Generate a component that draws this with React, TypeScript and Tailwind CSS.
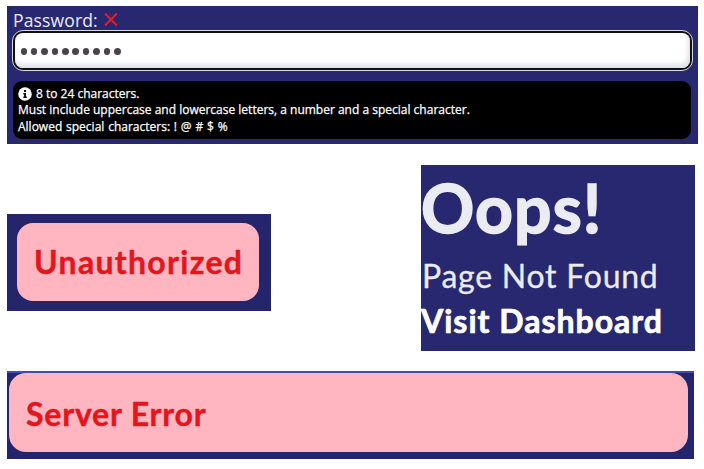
function PasswordField() {
  return (
    <section className="ml-[7px] h-[138px] w-[691px] bg-[#282871] px-[5px] pt-[2px] font-['Open_Sans',sans-serif]">
      <label className="flex h-[22px] items-center pl-[1px] text-[17.5px] leading-[22px] text-[#ebebf4]">
        <span className="pt-[2px] tracking-[0.15px]">Password:</span>
        <svg className="ml-[6px]" width="14" height="13" viewBox="0 0 14 13" fill="none" stroke="#e21f26" strokeWidth="2.1">
          <path d="M1 .5 13 12.5M13 .5 1 12.5" />
        </svg>
      </label>
      <div className="h-[41px] w-[681px] rounded-[11px] border border-[#d9d9df] bg-[#111] p-[2px]">
        <div className="flex h-full items-center gap-[3.9px] rounded-[8px] bg-white pl-[5.5px] pt-[1px] shadow-[inset_-2px_-4px_5px_#dce2e7]">
          {Array.from({ length: 10 }, (_, i) => (
            <span key={i} className="h-[7px] w-[6.5px] rounded-full bg-[#484548]" />
          ))}
        </div>
      </div>
      <div className="ml-[1px] mt-[10px] h-[58px] w-[678px] rounded-[9px] bg-black pl-[5px] pt-[5px] text-[12px] font-medium leading-[16.3px] text-white [-webkit-text-stroke:0.25px_white]">
        <div className="flex items-center">
          <svg className="mr-[4px]" width="14" height="14" viewBox="0 0 14 14">
            <circle cx="7" cy="7" r="6.8" fill="white" />
            <path d="M6 3h2v2H6zM5.3 6H8v3.5h.8V11H5.3V9.5h.8v-2h-.8z" fill="#111" />
          </svg>
          <span>8 to 24 characters.</span>
        </div>
        <div>Must include uppercase and lowercase letters, a number and a special character.</div>
        <div className="[word-spacing:0.7px]">Allowed special characters: ! @ # $ %</div>
      </div>
    </section>
  );
}

export default function App() {
  return (
    <main className="h-[469px] w-[704px] overflow-hidden bg-white pt-[6px] font-[Lato,sans-serif]">
      <PasswordField />
      <div className="ml-[7px] mt-[20px] flex h-[187px] w-[688px] items-start justify-between">
        <section className="mt-[50px] h-[97px] w-[264px] bg-[#25256e] pl-[10px] pt-[9px]">
          <p className="h-[78px] w-[242px] rounded-[16px] bg-[#ffb6c1] pl-[17px] text-[32px] font-bold leading-[78px] tracking-[1.3px] text-[#e4151b] [-webkit-text-stroke:0.4px_#e4151b]">
            <span>Unauthorized</span>
          </p>
        </section>
        <section className="mt-[1px] h-[186px] w-[274px] bg-[#282871] text-[#ebebf3]">
          <h1 className="h-[88px] text-[66px] font-bold leading-[86px] tracking-[1.1px] [-webkit-text-stroke:1.6px_#ebebf3]"><span>Oops!</span></h1>
          <p className="h-[46px] pl-[1px] text-[32px] leading-[46px] tracking-[0.75px] [-webkit-text-stroke:0.3px_#ebebf3]"><span>Page Not Found</span></p>
          <a className="block h-[44px] text-[32px] font-bold leading-[44px] tracking-[1px] text-white [-webkit-text-stroke:0.7px_white]"><span>Visit Dashboard</span></a>
        </section>
      </div>
      <section className="ml-[7px] mt-[20px] h-[88px] w-[687px] border-t-2 border-[#444daf] bg-[#25256e] pl-[2px]">
        <p className="h-[79px] w-[679px] rounded-[17px] bg-[#ffb6c1] pl-[17px] text-[32px] font-bold leading-[82px] tracking-[0.8px] text-[#e4151b] [-webkit-text-stroke:0.4px_#e4151b]">
          <span>Server Error</span>
        </p>
      </section>
    </main>
  );
}
